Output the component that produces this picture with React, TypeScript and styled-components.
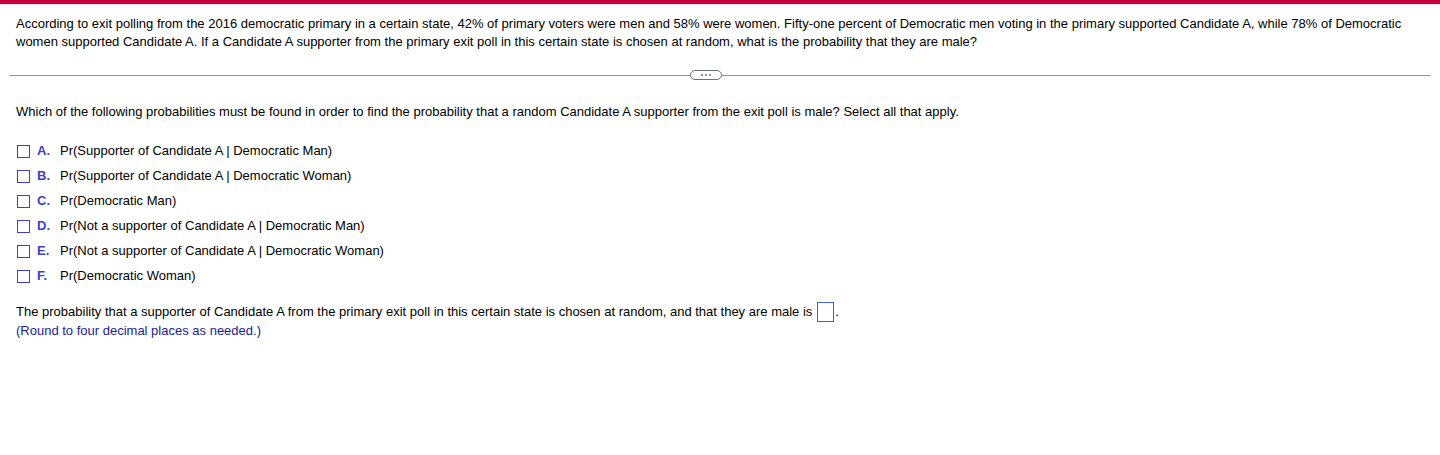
import React from "react";
import styled, { createGlobalStyle } from "styled-components";

const Global = createGlobalStyle`
  html, body { margin: 0; padding: 0; background: #fff; }
  body { font-family: "Liberation Sans", Arial, sans-serif; font-size: 13px; color: #000; }
`;

const Page = styled.div`
  width: 1440px;
  min-height: 455px;
  background: #fff;
`;

const TopBar = styled.div`
  height: 4px;
  background: #c5003e;
  border-bottom: 1px solid #dbe6f0;
`;

const Problem = styled.p`
  margin: 0;
  padding: 10px 16px 0 16px;
  line-height: 18px;
  width: 1400px;
`;

const DividerRow = styled.div`
  display: flex;
  align-items: center;
  margin: 19px 10px 0 10px;
  height: 10px;
`;

const Line = styled.div<{ $w?: number }>`
  flex: ${(p) => (p.$w ? `0 0 ${p.$w}px` : "1")};
  height: 1px;
  background: #8a8f9c;
`;

const Pill = styled.div`
  width: 30px;
  height: 8px;
  border: 1px solid #6b7280;
  border-radius: 5px;
  display: flex;
  align-items: center;
  justify-content: center;
  gap: 2px;
  background: #fff;
`;

const Dot = styled.span`
  width: 2px;
  height: 2px;
  background: #6b7280;
  border-radius: 50%;
`;

const Question = styled.p`
  margin: 23px 0 0 16px;
  line-height: 18px;
`;

const Options = styled.div`
  display: flex;
  flex-direction: column;
  gap: 7px;
  margin: 21px 0 0 17px;
`;

const Option = styled.label`
  display: flex;
  align-items: center;
  height: 18px;
  line-height: 18px;
`;

const Box = styled.span`
  width: 11px;
  height: 11px;
  border: 1px solid #3b3fd0;
  margin-right: 7px;
  flex: none;
`;

const Letter = styled.span`
  color: #3b3fd0;
  font-weight: bold;
  width: 23px;
`;

const Answer = styled.p`
  margin: 17px 0 0 16px;
  line-height: 18px;
  display: flex;
  align-items: center;
`;

const Input = styled.span`
  display: inline-block;
  width: 15px;
  height: 18px;
  border: 1px solid #3b63c9;
  margin: 0 1px 0 5px;
`;

const Note = styled.p`
  margin: 0 0 0 16px;
  line-height: 18px;
  color: #1a1a9e;
`;

const options: [string, string][] = [
  ["A.", "Pr(Supporter of Candidate A | Democratic Man)"],
  ["B.", "Pr(Supporter of Candidate A | Democratic Woman)"],
  ["C.", "Pr(Democratic Man)"],
  ["D.", "Pr(Not a supporter of Candidate A | Democratic Man)"],
  ["E.", "Pr(Not a supporter of Candidate A | Democratic Woman)"],
  ["F.", "Pr(Democratic Woman)"],
];

export default function App() {
  return (
    <Page>
      <Global />
      <TopBar />
      <Problem>
        According to exit polling from the 2016 democratic primary in a certain state, 42% of primary voters were men and 58% were women. Fifty-one percent of Democratic men voting in the primary supported Candidate A, while 78% of Democratic women supported Candidate A. If a Candidate A supporter from the primary exit poll in this certain state is chosen at random, what is the probability that they are male?
      </Problem>
      <DividerRow>
        <Line $w={680} />
        <Pill>
          <Dot />
          <Dot />
          <Dot />
        </Pill>
        <Line />
      </DividerRow>
      <Question>
        Which of the following probabilities must be found in order to find the probability that a random Candidate A supporter from the exit poll is male? Select all that apply.
      </Question>
      <Options>
        {options.map(([l, t]) => (
          <Option key={l}>
            <Box />
            <Letter>{l}</Letter>
            <span>{t}</span>
          </Option>
        ))}
      </Options>
      <Answer>
        The probability that a supporter of Candidate A from the primary exit poll in this certain state is chosen at random, and that they are male is
        <Input />.
      </Answer>
      <Note>(Round to four decimal places as needed.)</Note>
    </Page>
  );
}
